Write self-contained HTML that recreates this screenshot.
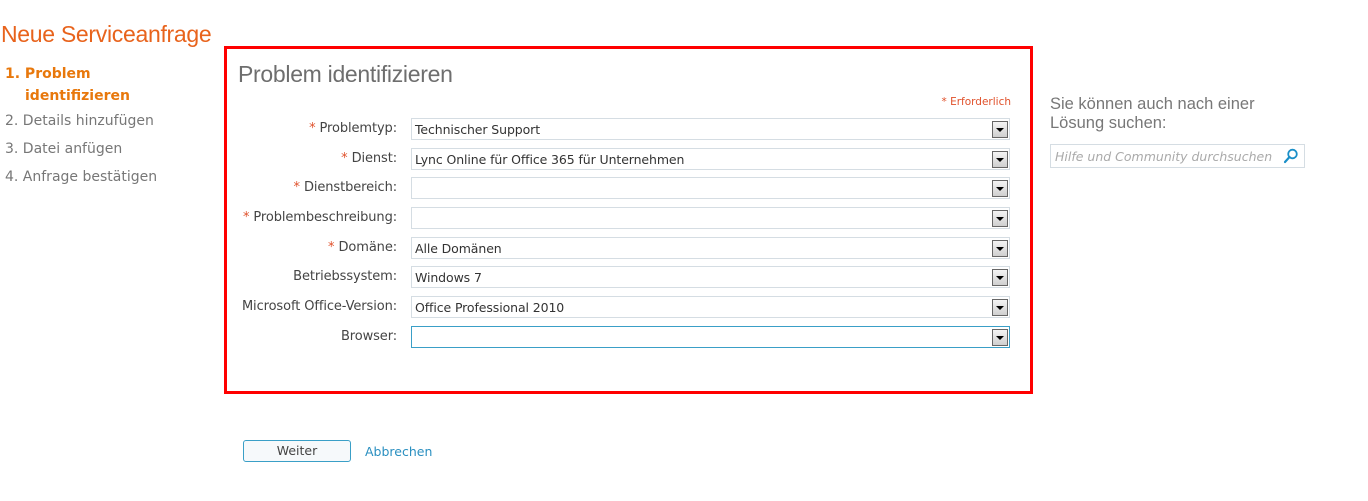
<!DOCTYPE html>
<html><head><meta charset="utf-8"><style>
body{margin:0;width:1368px;height:501px;background:#fff;position:relative;overflow:hidden;font-family:"Liberation Sans",sans-serif;}
.a{position:absolute;}
.lbl{position:absolute;right:971px;color:#444;white-space:nowrap;font-family:"DejaVu Sans",sans-serif;font-size:13px;letter-spacing:-0.1px;}
.lbl i{font-style:normal;color:#e0502a;}
.sel{position:absolute;left:411px;width:597px;height:20px;border:1px solid #d5dde3;background:#fff;}
.sel span{position:absolute;left:3px;top:3px;font-family:"DejaVu Sans",sans-serif;font-size:12.5px;color:#333;letter-spacing:-0.1px;}
.btn{position:absolute;right:1px;top:2px;width:14px;height:15px;border:1px solid #666;background:linear-gradient(#f4f4f4,#cfcfcf);}
.btn:after{content:"";position:absolute;left:3px;top:6px;border-left:4px solid transparent;border-right:4px solid transparent;border-top:4px solid #000;}
.steps{font-family:"DejaVu Sans",sans-serif;font-size:14px;color:#777;}
</style></head><body>
<div class="a" style="left:1px;top:21px;font-size:23px;color:#e8631c;letter-spacing:-0.3px;">Neue Serviceanfrage</div>
<div class="a steps" style="left:5px;top:63px;color:#e8780c;font-weight:bold;line-height:22px;">1. Problem<br><span style="padding-left:20px">identifizieren</span></div>
<div class="a steps" style="left:5px;top:113px;">2. Details hinzufügen</div>
<div class="a steps" style="left:5px;top:141px;">3. Datei anfügen</div>
<div class="a steps" style="left:5px;top:169px;">4. Anfrage bestätigen</div>

<div class="a" style="left:224px;top:46px;width:803px;height:342px;border:3px solid #f00;"></div>
<div class="a" style="left:238px;top:61px;font-size:23px;color:#6e6e6e;letter-spacing:-0.3px;">Problem identifizieren</div>
<div class="a" style="right:357px;top:96px;font-family:'DejaVu Sans',sans-serif;font-size:10.5px;color:#e0502a;">* Erforderlich</div>

<div class="lbl" style="top:121px"><i>*</i> Problemtyp:</div>
<div class="sel" style="top:118px"><span>Technischer Support</span><div class="btn"></div></div>
<div class="lbl" style="top:151px"><i>*</i> Dienst:</div>
<div class="sel" style="top:148px"><span>Lync Online für Office 365 für Unternehmen</span><div class="btn"></div></div>
<div class="lbl" style="top:180px"><i>*</i> Dienstbereich:</div>
<div class="sel" style="top:177px"><span></span><div class="btn"></div></div>
<div class="lbl" style="top:210px"><i>*</i> Problembeschreibung:</div>
<div class="sel" style="top:207px"><span></span><div class="btn"></div></div>
<div class="lbl" style="top:240px"><i>*</i> Domäne:</div>
<div class="sel" style="top:237px"><span>Alle Domänen</span><div class="btn"></div></div>
<div class="lbl" style="top:269px">Betriebssystem:</div>
<div class="sel" style="top:266px"><span>Windows 7</span><div class="btn"></div></div>
<div class="lbl" style="top:299px">Microsoft Office-Version:</div>
<div class="sel" style="top:296px"><span>Office Professional 2010</span><div class="btn"></div></div>
<div class="lbl" style="top:329px">Browser:</div>
<div class="sel" style="top:326px;border-color:#3a9fc7"><span></span><div class="btn"></div></div>

<div class="a" style="left:1050px;top:95px;font-size:16.5px;color:#777;line-height:19px;">Sie können auch nach einer<br>Lösung suchen:</div>
<div class="a" style="left:1050px;top:144px;width:253px;height:22px;border:1px solid #d5dde3;">
<span style="position:absolute;left:4px;top:4px;font-family:'DejaVu Sans',sans-serif;font-size:12.5px;font-style:italic;color:#aaa;">Hilfe und Community durchsuchen</span>
<svg style="position:absolute;right:5px;top:3px" width="16" height="16" viewBox="0 0 16 16"><circle cx="9.5" cy="6" r="4.3" fill="none" stroke="#1a8fc8" stroke-width="1.8"/><path d="M6.5 9 L2 14" stroke="#1a8fc8" stroke-width="2.2" stroke-linecap="round"/></svg>
</div>

<div class="a" style="left:243px;top:440px;width:106px;height:20px;border:1px solid #3a9fc7;border-radius:3px;background:#f6f9fb;text-align:center;line-height:20px;font-family:'DejaVu Sans',sans-serif;font-size:12.5px;color:#444;">Weiter</div>
<div class="a" style="left:365px;top:444px;font-family:'DejaVu Sans',sans-serif;font-size:12.5px;color:#2a8fc0;">Abbrechen</div>
</body></html>
